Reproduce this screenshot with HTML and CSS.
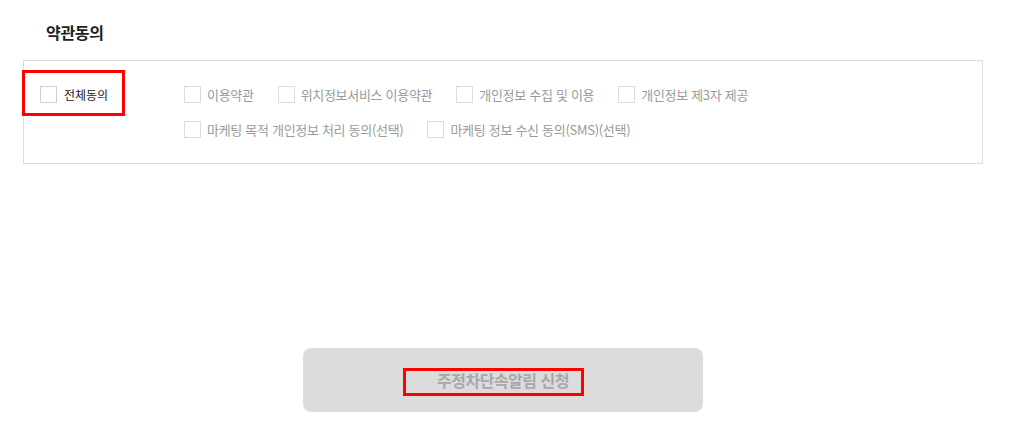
FILE: index.html
```html
<!DOCTYPE html>
<html lang="ko">
<head>
<meta charset="utf-8">
<link rel="stylesheet" href="styles.css">
</head>
<body>
<div class="wrap">
  <h2 class="title">약관동의</h2>
  <div class="terms">
    <div class="all">
      <label class="item item-all"><span class="cb cb-all"></span><span>전체동의</span></label>
    </div>
    <span class="mark mark-all"></span>
    <div class="rows">
      <div class="row">
        <label class="item"><span class="cb"></span><span>이용약관</span></label>
        <label class="item"><span class="cb"></span><span>위치정보서비스 이용약관</span></label>
        <label class="item"><span class="cb"></span><span>개인정보 수집 및 이용</span></label>
        <label class="item"><span class="cb"></span><span>개인정보 제3자 제공</span></label>
      </div>
      <div class="row">
        <label class="item"><span class="cb"></span><span>마케팅 목적 개인정보 처리 동의(선택)</span></label>
        <label class="item"><span class="cb"></span><span>마케팅 정보 수신 동의(SMS)(선택)</span></label>
      </div>
    </div>
  </div>
  <div class="btn-area">
    <button class="btn" type="button">주정차단속알림 신청<span class="mark mark-btn"></span></button>
  </div>
</div>
</body>
</html>
```
FILE: styles.css
```css
html, body {
  margin: 0;
  padding: 0;
  background: #fff;
}
body {
  font-family: "Noto Sans CJK KR", "Noto Sans", sans-serif;
  color: #222;
}
.wrap {
  width: 960px;
  margin-left: 23px;
  padding-top: 22px;
}
.title {
  margin: 0 0 18px 23px;
  font-size: 16px;
  line-height: 20px;
  font-weight: 700;
  letter-spacing: -0.3px;
  color: #222;
}
.terms {
  position: relative;
  display: flex;
  border: 1px solid #dcdcdc;
  padding: 25px 16px 25px;
}
.all {
  width: 144px;
  flex: none;
}
.rows {
  display: flex;
  flex-direction: column;
  gap: 18px;
}
.row {
  display: flex;
  gap: 24px;
}
.item {
  display: flex;
  align-items: center;
  gap: 6px;
  height: 17px;
  font-size: 13px;
  line-height: 17px;
  letter-spacing: -0.3px;
  color: #9a9a9a;
  white-space: nowrap;
}
.item-all {
  gap: 7px;
  font-size: 12px;
  letter-spacing: 0;
  color: #222;
}
.cb {
  display: block;
  width: 17px;
  height: 17px;
  box-sizing: border-box;
  border: 1px solid #dcdcdc;
  background: #fff;
  flex: none;
}
.cb-all {
  border-color: #cfcfcf;
}
.mark {
  position: absolute;
  box-sizing: border-box;
  border: 3px solid #ff0000;
  pointer-events: none;
}
.mark-all {
  left: -2px;
  top: 9px;
  width: 103px;
  height: 46px;
}
.btn-area {
  display: flex;
  justify-content: center;
  padding-top: 184px;
}
.btn {
  position: relative;
  width: 400px;
  height: 64px;
  border: none;
  border-radius: 8px;
  background: #dcdcdc;
  color: #a8a8a8;
  font-family: "Noto Sans CJK KR", "Noto Sans", sans-serif;
  font-size: 16px;
  font-weight: 700;
  letter-spacing: -0.5px;
  padding: 0;
}
.mark-btn {
  left: 100px;
  top: 20px;
  width: 181px;
  height: 28px;
}
```
